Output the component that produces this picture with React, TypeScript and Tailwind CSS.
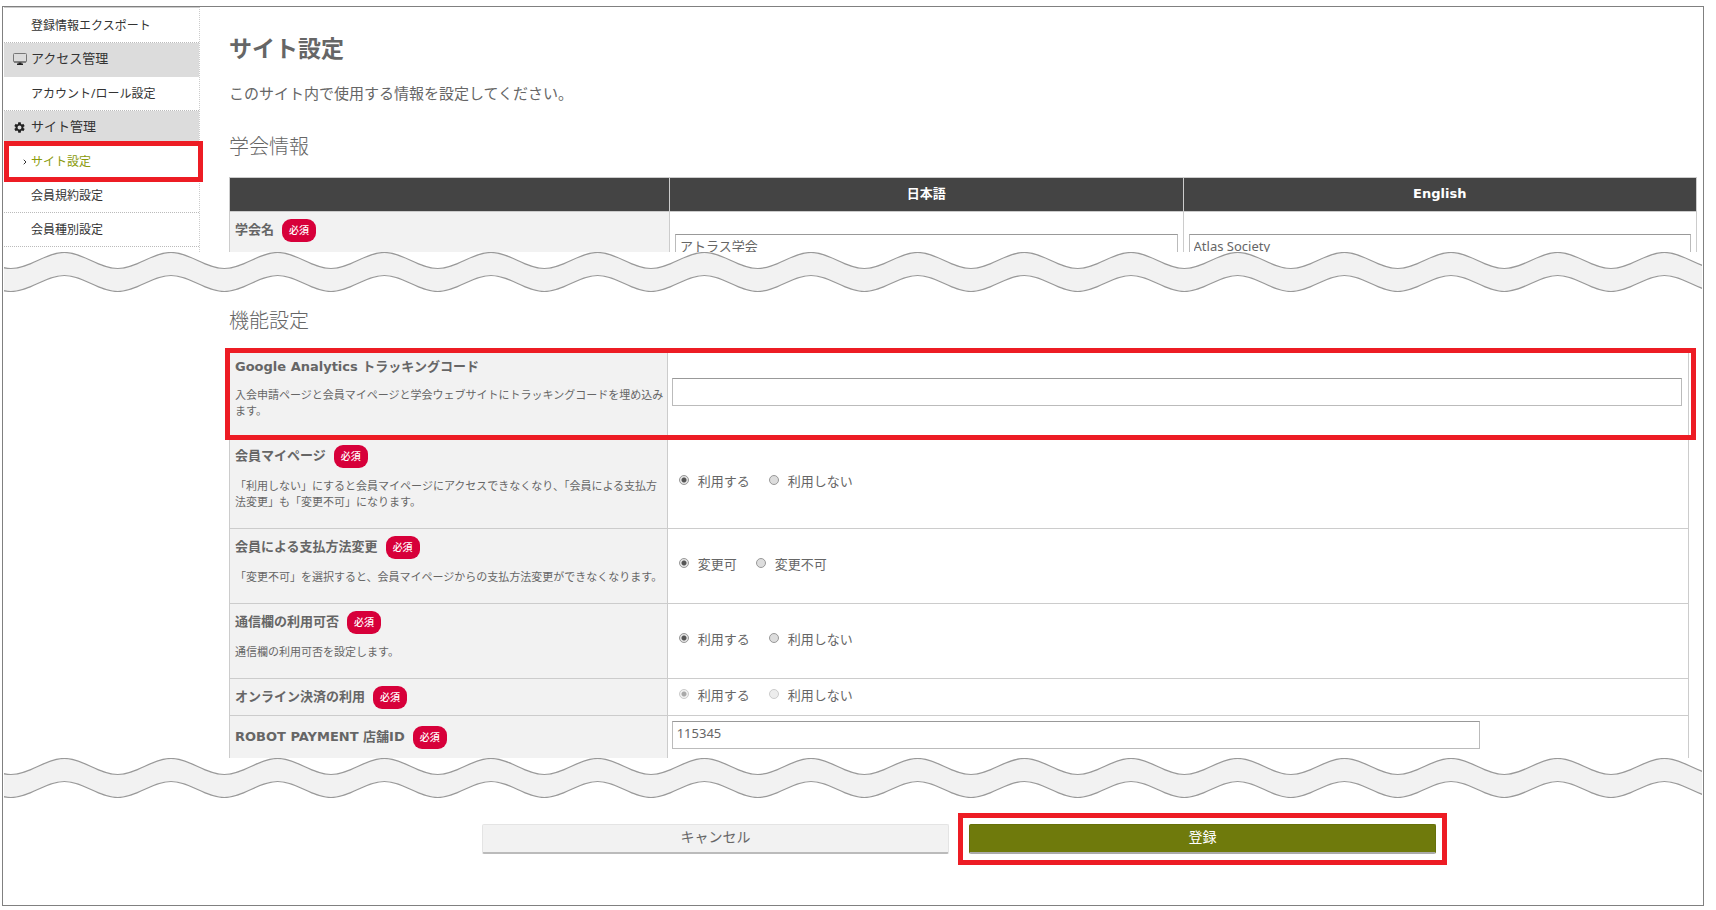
import React from 'react';
import { ChevronRight } from 'lucide-react';
import { MdSettings } from 'react-icons/md';

const PERIOD = 320 / 3;
const HALF = PERIOD / 2;
const PULL = HALF * 0.3642;

// One wavy edge, running left to right from the trough at x = 7
function waveEdge(top: number) {
  let x = 7 - PERIOD;
  let d = `M${x} ${top + 16}`;
  for (let i = 0; i < 80; i++) {
    const from = i % 2 === 0 ? top + 16 : top;
    const to = i % 2 === 0 ? top : top + 16;
    d += ` C${x + PULL} ${from} ${x + HALF - PULL} ${to} ${x + HALF} ${to}`;
    x += HALF;
  }
  return d;
}

function WaveBreak() {
  const upper = waveEdge(0.5);
  const lower = waveEdge(23.5);
  return (
    <svg className="block w-full h-10 overflow-hidden" aria-hidden="true">
      <path d={`${upper} V60 H-120 Z`} fill="#f2f2f2" />
      <path d={`${lower} V60 H-120 Z`} fill="#fff" />
      <path d={upper} fill="none" stroke="#999" strokeWidth="1.2" />
      <path d={lower} fill="none" stroke="#999" strokeWidth="1.2" />
    </svg>
  );
}

function MonitorIcon() {
  return (
    <svg className="w-[14px] h-3" viewBox="0 0 14 12" fill="none" aria-hidden="true">
      <rect x="0.5" y="0.5" width="13" height="8.5" rx="1" stroke="#777" />
      <path d="M1 9h12" stroke="#555" />
      <path d="M5.5 9.5h3V10.5H10V12H4v-1.5h1.5z" fill="#222" />
    </svg>
  );
}

function Required() {
  return (
    <span className="inline-flex items-center justify-center w-[34px] h-[23px] ml-2 rounded-[9px] bg-[#d7003a] text-white text-[10px] font-medium">
      必須
    </span>
  );
}

const menu = [
  { label: '登録情報エクスポート' },
  { label: 'アクセス管理', icon: 'monitor' },
  { label: 'アカウント/ロール設定' },
  { label: 'サイト管理', icon: 'gear' },
  { label: 'サイト設定', active: true },
  { label: '会員規約設定' },
  { label: '会員種別設定' },
];

function Sidebar() {
  return (
    <nav className="w-[196px] shrink-0 border-t border-t-[#ccc] border-r border-r-[#ccc] [border-right-style:dotted] pt-px text-[#333]">
      <ul>
        {menu.map(item =>
          item.icon ? (
            <li key={item.label} className="h-[34px] flex items-center bg-[#dcdcdc] pb-0.5 text-[13px]">
              <span className="w-[27px] pl-1 flex justify-center">
                {item.icon === 'monitor' ? <MonitorIcon /> : <MdSettings className="w-[13px] h-[13px] text-[#222]" />}
              </span>
              {item.label}
            </li>
          ) : (
            <li key={item.label} className="relative h-[34px] border-b border-dotted border-[#bbb] text-xs">
              <a href="#" className={`flex items-center h-full ${item.active ? 'text-[#8a9a0a]' : ''}`}>
                <span className="w-[27px] flex justify-end">
                  {item.active && <ChevronRight className="w-2 h-2 mr-0.5 text-[#333]" strokeWidth={3} />}
                </span>
                {item.label}
              </a>
              {item.active && (
                <span className="absolute -top-1 left-0 -right-1 -bottom-1 border-5 border-[#ed1c24] pointer-events-none" />
              )}
            </li>
          )
        )}
      </ul>
    </nav>
  );
}

function TextBox({ id, value, label, className = 'w-full' }: { id: string; value: string; label: string; className?: string }) {
  return (
    <input
      id={id}
      type="text"
      aria-label={label}
      defaultValue={value}
      className={`block h-7 px-1 pb-1 bg-white border border-[#bbb] border-t-[#999] text-[13px] text-[#666] ${className}`}
    />
  );
}

function RadioGroup({ name, options, disabled }: { name: string; options: string[]; disabled?: boolean }) {
  return (
    <div className="flex items-center gap-[19px] pl-[7px] pb-1">
      {options.map((option, i) => (
        <label key={option} className="flex items-center gap-[9px] leading-5">
          <input
            type="radio"
            name={name}
            defaultChecked={i === 0}
            disabled={disabled}
            className="appearance-none w-[10px] h-[10px] -mt-0.5 rounded-full border border-[#999] bg-[#ddd] checked:bg-[radial-gradient(circle,#555_0_2px,#e4e4e4_3px)] disabled:opacity-50"
          />
          {option}
        </label>
      ))}
    </div>
  );
}

type Row = {
  id: string;
  title: string;
  note?: string;
  required?: boolean;
  options?: string[];
  disabled?: boolean;
  value?: string;
};

const rows: Row[] = [
  {
    id: 'tracking',
    title: 'Google Analytics トラッキングコード',
    note: '入会申請ページと会員マイページと学会ウェブサイトにトラッキングコードを埋め込みます。',
    value: '',
  },
  {
    id: 'mypage',
    title: '会員マイページ',
    note: '「利用しない」にすると会員マイページにアクセスできなくなり、「会員による支払方法変更」も「変更不可」になります。',
    required: true,
    options: ['利用する', '利用しない'],
  },
  {
    id: 'payment-method',
    title: '会員による支払方法変更',
    note: '「変更不可」を選択すると、会員マイページからの支払方法変更ができなくなります。',
    required: true,
    options: ['変更可', '変更不可'],
  },
  {
    id: 'message',
    title: '通信欄の利用可否',
    note: '通信欄の利用可否を設定します。',
    required: true,
    options: ['利用する', '利用しない'],
  },
  {
    id: 'online-payment',
    title: 'オンライン決済の利用',
    required: true,
    options: ['利用する', '利用しない'],
    disabled: true,
  },
  { id: 'shop-id', title: 'ROBOT PAYMENT 店舗ID', required: true, value: '115345' },
];

export default function App() {
  return (
    <div className="bg-white pt-1.5 pb-[5px] pl-0.5 pr-3 font-['Noto_Sans','Noto_Sans_CJK_JP',sans-serif] text-[13px] text-[#666]">
      <div className="border border-[#808080] px-px pb-[41px]">
        {/* Page head and society info, cut off by the first wave */}
        <div className="flex h-[245px] overflow-hidden">
          <Sidebar />
          <main className="flex-1 pl-[29px] pr-[5px] pt-[25px]">
            <h1 className="text-[23px] leading-8 font-bold">サイト設定</h1>
            <p className="mt-[17px] text-[15px] leading-6">このサイト内で使用する情報を設定してください。</p>
            <h2 className="mt-7 text-xl leading-7 font-light">学会情報</h2>
            <table className="w-full mt-4 table-fixed border-collapse border border-[#ccc]">
              <thead>
                <tr className="h-[34px] bg-[#444] font-['DejaVu_Sans','Noto_Sans_CJK_JP',sans-serif] text-white">
                  <th className="w-[30%] border border-[#ccc]"></th>
                  <th className="w-[35%] border border-[#ccc] pb-0.5">日本語</th>
                  <th className="w-[35%] border border-[#ccc] pb-0.5">English</th>
                </tr>
              </thead>
              <tbody>
                <tr className="h-[72px]">
                  <th className="border border-[#ccc] bg-[#f2f2f2] pl-[5px] pt-1.5 text-left align-top">
                    <span className="flex items-center h-6">
                      学会名
                      <Required />
                    </span>
                  </th>
                  <td className="border border-[#ccc] px-[5px]">
                    <TextBox id="name-ja" label="学会名 日本語" value="アトラス学会" />
                  </td>
                  <td className="border border-[#ccc] px-[5px]">
                    <TextBox id="name-en" label="学会名 English" value="Atlas Society" />
                  </td>
                </tr>
              </tbody>
            </table>
          </main>
        </div>

        <WaveBreak />

        <section className="pl-[225px] pr-[13px] pt-[15px]">
          <h2 className="text-xl leading-7 font-light">機能設定</h2>
          <div className="relative mt-[15px]">
            <table className="w-full table-fixed border-collapse border-x border-t border-[#ccc]">
              <tbody>
                {rows.map(row => (
                  <tr key={row.id} className="border-t border-[#ccc]">
                    <th className="w-[30%] border-r border-[#ccc] bg-[#f2f2f2] pl-[5px] py-1.5 text-left">
                      <span
                        className={`flex items-center font-['DejaVu_Sans','Noto_Sans_CJK_JP',sans-serif] ${row.required ? 'h-6' : 'h-5'}`}
                      >
                        {row.title}
                        {row.required && <Required />}
                      </span>
                      {row.note && <p className="mt-2.5 mb-3 text-[11px] leading-4 font-normal">{row.note}</p>}
                    </th>
                    <td className="pl-1 pr-1.5">
                      {row.options ? (
                        <RadioGroup name={row.id} options={row.options} disabled={row.disabled} />
                      ) : row.value ? (
                        <div className="pt-[5px] pb-[9px]">
                          <TextBox id={row.id} label={row.title} value={row.value} className="w-4/5" />
                        </div>
                      ) : (
                        <div className="pb-1">
                          <TextBox id={row.id} label={row.title} value="" />
                        </div>
                      )}
                    </td>
                  </tr>
                ))}
              </tbody>
            </table>
            <span className="absolute -top-0.5 -left-1 -right-[7px] h-[92px] border-5 border-[#ed1c24] pointer-events-none" />
          </div>
        </section>

        <WaveBreak />

        <div className="flex justify-center gap-5 pl-[225px] pr-[13px] pt-[26px] pb-2.5">
          <button className="w-[32%] h-[30px] pb-1 rounded-xs border border-[#e4e4e4] border-b-2 border-b-[#bbb] bg-[#f2f2f2] text-sm">
            キャンセル
          </button>
          <div className="relative w-[32%]">
            <button className="w-full h-[30px] pb-1 rounded-xs border border-[#66700a] border-b-2 border-b-[#aaa] bg-[#6f7a0c] text-sm text-white">
              登録
            </button>
            <span className="absolute -inset-[11px] border-5 border-[#ed1c24] pointer-events-none" />
          </div>
        </div>
      </div>
    </div>
  );
}
